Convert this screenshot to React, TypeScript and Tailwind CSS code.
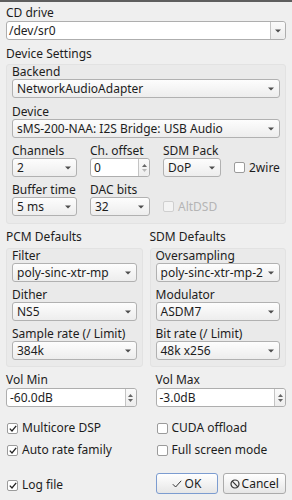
import React from 'react'

const Arrow = () => (
  <svg width="6" height="4" viewBox="0 0 6 4" className="shrink-0">
    <path d="M0 0.5h6L3 3.5z" fill="#4d4d4d" />
  </svg>
)

const Label: React.FC<{ children: React.ReactNode; className?: string }> = ({ children, className = '' }) => (
  <div className={`h-[14px] leading-[14px] whitespace-nowrap ${className}`}>{children}</div>
)

// read-only combo box, looks like a button
const Combo: React.FC<{ value: string }> = ({ value }) => (
  <div className="h-[19px] flex items-center justify-between pl-[4px] pr-[5px] border border-[#b1b1b1] rounded-[3px] bg-linear-to-b from-[#fdfdfd] to-[#ededed] leading-none whitespace-nowrap overflow-hidden">
    <span>{value}</span>
    <Arrow />
  </div>
)

// editable combo box (white field + drop button)
const EditCombo: React.FC<{ value: string }> = ({ value }) => (
  <div className="h-[19px] flex items-stretch border border-[#aeaeae] rounded-[3px] bg-white">
    <div className="flex-1 flex items-center pl-[2px] leading-none">{value}</div>
    <div className="w-[15px] flex items-center justify-center border-l border-[#c4c4c4] bg-linear-to-b from-[#fafafa] to-[#ececec] rounded-r-[3px]">
      <Arrow />
    </div>
  </div>
)

const Spin: React.FC<{ value: string; atMin?: boolean }> = ({ value, atMin = false }) => (
  <div className="h-[19px] flex items-stretch border border-[#aeaeae] rounded-[3px] bg-white">
    <div className="flex-1 flex items-center pl-[3px] leading-none">{value}</div>
    <div className="w-[11px] flex flex-col items-center justify-center gap-[2px] border-l border-[#c4c4c4] bg-linear-to-b from-[#fafafa] to-[#ededed] rounded-r-[3px]">
      <svg width="5" height="3" viewBox="0 0 5 3">
        <path d="M0 3h5L2.5 0z" fill="#666666" />
      </svg>
      <svg width="5" height="3" viewBox="0 0 5 3">
        <path d="M0 0h5L2.5 3z" fill={atMin ? '#b8b8b8' : '#666666'} />
      </svg>
    </div>
  </div>
)

const Check: React.FC<{ label: string; checked?: boolean; disabled?: boolean }> = ({
  label,
  checked = false,
  disabled = false
}) => (
  <div className="flex items-center gap-[4px] whitespace-nowrap">
    <div
      className={`ml-[1px] w-[11px] h-[11px] rounded-[2px] border flex items-center justify-center ${
        disabled ? 'border-[#cfcfcf] bg-[#f3f3f3]' : 'border-[#9b9b9b] bg-white'
      }`}
    >
      {checked && (
        <svg width="8" height="7" viewBox="0 0 8 7">
          <path d="M0.8 3.6L3 6L7.2 0.8" fill="none" stroke="#222" strokeWidth="1.3" />
        </svg>
      )}
    </div>
    <span className={`leading-[14px] ${disabled ? 'text-[#b5b5b5]' : ''}`}>{label}</span>
  </div>
)

const Group: React.FC<{ children: React.ReactNode; className?: string }> = ({ children, className = '' }) => (
  <div className={`border border-[#e2e2e2] rounded-[3px] bg-[#eaeaea] px-[5px] ${className}`}>{children}</div>
)

export default function App() {
  return (
    <div className="w-[292px] h-[500px] overflow-hidden bg-[#efefef] text-[12px] text-[#1d1d1d] font-['Noto_Sans','DejaVu_Sans',sans-serif]">
      <div className="h-[2px] bg-[#5e5e5e]" />
      <div className="px-[6px]">
        {/* CD drive */}
        <Label className="mt-[4px]">CD drive</Label>
        <div className="mt-[1px]">
          <EditCombo value="/dev/sr0" />
        </div>

        {/* Device settings */}
        <Label className="mt-[7px]">Device Settings</Label>
        <Group className="mt-[3px] pb-[7px]">
          <Label>Backend</Label>
          <Combo value="NetworkAudioAdapter" />

          <Label className="mt-[7px]">Device</Label>
          <Combo value="sMS-200-NAA: I2S Bridge: USB Audio" />

          <div className="mt-[6px] flex">
            <div className="w-[65px]">
              <Label>Channels</Label>
              <Combo value="2" />
            </div>
            <div className="ml-[13px] w-[60px]">
              <Label>Ch. offset</Label>
              <Spin value="0" atMin />
            </div>
            <div className="ml-[13px] w-[58px]">
              <Label>SDM Pack</Label>
              <Combo value="DoP" />
            </div>
            <div className="ml-[12px] pt-[14px]">
              <div className="h-[19px] flex items-center">
                <Check label="2wire" />
              </div>
            </div>
          </div>

          <div className="mt-[6px] flex">
            <div className="w-[65px]">
              <Label>Buffer time</Label>
              <Combo value="5 ms" />
            </div>
            <div className="ml-[13px] w-[60px]">
              <Label>DAC bits</Label>
              <Combo value="32" />
            </div>
            <div className="ml-[12px] pt-[14px]">
              <div className="h-[19px] flex items-center">
                <Check label="AltDSD" disabled />
              </div>
            </div>
          </div>
        </Group>

        {/* PCM / SDM defaults */}
        <div className="mt-[6px] grid grid-cols-2 gap-x-[7px]">
          <div>
            <Label>PCM Defaults</Label>
            <Group className="mt-[4px] pb-[6px]">
              <Label>Filter</Label>
              <Combo value="poly-sinc-xtr-mp" />
              <Label className="mt-[6px]">Dither</Label>
              <Combo value="NS5" />
              <Label className="mt-[6px]">Sample rate (/ Limit)</Label>
              <Combo value="384k" />
            </Group>
          </div>
          <div>
            <Label>SDM Defaults</Label>
            <Group className="mt-[4px] pb-[6px]">
              <Label>Oversampling</Label>
              <Combo value="poly-sinc-xtr-mp-2" />
              <Label className="mt-[6px]">Modulator</Label>
              <Combo value="ASDM7" />
              <Label className="mt-[6px]">Bit rate (/ Limit)</Label>
              <Combo value="48k x256" />
            </Group>
          </div>
        </div>

        {/* Volume */}
        <div className="mt-[6px] grid grid-cols-2 gap-x-[19px]">
          <div>
            <Label>Vol Min</Label>
            <div className="mt-[1px]">
              <Spin value="-60.0dB" />
            </div>
          </div>
          <div>
            <Label>Vol Max</Label>
            <div className="mt-[1px]">
              <Spin value="-3.0dB" />
            </div>
          </div>
        </div>

        {/* Options */}
        <div className="mt-[14px] grid grid-cols-2 gap-x-[19px] gap-y-[8px]">
          <Check label="Multicore DSP" checked />
          <Check label="CUDA offload" />
          <Check label="Auto rate family" checked />
          <Check label="Full screen mode" />
        </div>

        {/* Bottom */}
        <div className="mt-[16px] grid grid-cols-2 gap-x-[19px]">
          <div className="pt-[5px]">
            <Check label="Log file" checked />
          </div>
          <div className="flex gap-[5px]">
            <button className="w-[62px] h-[21px] flex items-center justify-center gap-[3px] border border-[#7c9cd0] rounded-[3px] bg-linear-to-b from-white to-[#e6e6e6]">
              <svg width="10" height="8" viewBox="0 0 10 8">
                <path d="M0.8 4.2L3.6 7L9.2 0.8" fill="none" stroke="#333" strokeWidth="1" />
              </svg>
              <span className="leading-none">OK</span>
            </button>
            <button className="flex-1 h-[21px] flex items-center justify-center gap-[2px] border border-[#ababab] rounded-[3px] bg-linear-to-b from-white to-[#e6e6e6]">
              <svg width="10" height="10" viewBox="0 0 10 10">
                <circle cx="5" cy="5" r="4" fill="none" stroke="#333" strokeWidth="1.2" />
                <path d="M2.2 2.2L7.8 7.8" stroke="#333" strokeWidth="1.2" />
              </svg>
              <span className="leading-none">Cancel</span>
            </button>
          </div>
        </div>
      </div>
    </div>
  )
}
